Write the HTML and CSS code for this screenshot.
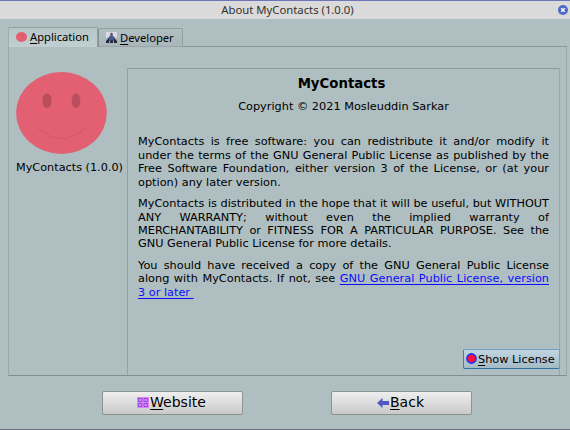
FILE: index.html
```
<!DOCTYPE html>
<html lang="en">
<head>
<meta charset="utf-8">
<title>About MyContacts</title>
<link rel="stylesheet" href="styles.css">
</head>
<body>
<div class="window">
  <header class="titlebar">
    <span class="caption">About MyContacts (1.0.0)</span>
    <svg class="close" viewBox="0 0 10 10"><circle cx="5" cy="5" r="5" fill="#5068c4"/><path d="M3.2 3.2l3.6 3.6M6.8 3.2L3.2 6.8" stroke="#fff" stroke-width="1.5"/></svg>
  </header>
  <nav class="tabs">
    <div class="tab active">
      <svg class="tab-face" viewBox="0 0 11 10"><ellipse cx="5.5" cy="5" rx="5.5" ry="5" fill="#e45e70"/><ellipse cx="3.7" cy="3.5" rx=".5" ry=".7" fill="#c95263"/><ellipse cx="7.3" cy="3.5" rx=".5" ry=".7" fill="#c95263"/></svg>
      <span><u>A</u>pplication</span>
    </div>
    <div class="tab">
      <svg class="tab-person" viewBox="0 0 11 11"><path fill="#d8dce8" d="M0 0h11v11H0z"/><path fill="#a4abba" d="M0 6l3-1 5 0 3 1v5H0z"/><path fill="#465b8c" d="M4 3.300h3L9 7 8 8V9H3V8L2 7z"/><path fill="#24273b" d="M0 9l3-3v5H0zM8 6l3 3v2H8zM4 8.500h3V11H4z"/><circle cx="5.500" cy="2" r="1.300" fill="#62504f"/></svg>
      <span><u>D</u>eveloper</span>
    </div>
    <div class="tab-line"></div>
  </nav>
  <main class="panel">
    <aside class="side">
      <svg class="face" viewBox="0 0 91 82"><ellipse cx="45.5" cy="41" rx="45.3" ry="40.9" fill="#e26072"/><ellipse cx="31" cy="28.7" rx="4.6" ry="7.4" fill="#b94e5d"/><ellipse cx="60" cy="28.7" rx="4.4" ry="7.4" fill="#b94e5d"/><path d="M20.5 55Q45.5 78 70.500 55" fill="none" stroke="#cb5465" stroke-width=".7"/></svg>
      <div class="name">MyContacts (1.0.0)</div>
    </aside>
    <section class="about">
      <h1>MyContacts</h1>
      <div class="copyright">Copyright © 2021 Mosleuddin Sarkar</div>
      <p>
        <span class="line">MyContacts is free software: you can redistribute it and/or modify it</span>
        <span class="line">under the terms of the GNU General Public License as published by the</span>
        <span class="line">Free Software Foundation, either version 3 of the License, or (at your</span>
        <span class="line last">option) any later version.</span>
      </p>
      <p>
        <span class="line">MyContacts is distributed in the hope that it will be useful, but WITHOUT</span>
        <span class="line">ANY WARRANTY; without even the implied warranty of</span>
        <span class="line">MERCHANTABILITY or FITNESS FOR A PARTICULAR PURPOSE. See the</span>
        <span class="line last">GNU General Public License for more details.</span>
      </p>
      <p>
        <span class="line">You should have received a copy of the GNU General Public License</span>
        <span class="line">along with MyContacts. If not, see <a>GNU General Public License, version</a></span>
        <span class="line last"><a>3 or later&nbsp;</a></span>
      </p>
      <div class="license"><svg viewBox="0 0 11 11"><circle cx="5.500" cy="5.500" r="4.600" fill="#f81040" stroke="#2030ff" stroke-width="1.600"/></svg><span><u>S</u>how License</span></div>
    </section>
  </main>
  <footer class="actions">
    <div class="button"><svg class="grid-icon" viewBox="0 0 12 11"><path fill="#e583ee" d="M0 0h12v11H0z"/><path fill="none" stroke="#8050ec" d="M1.500 1.500h3.500v3h-3.500zM7 1.500h3.500v3h-3.500zM1.500 6.500h3.500v3h-3.500zM7 6.500h3.500v3h-3.500z"/></svg><span><u>W</u>ebsite</span></div>
    <div class="button"><svg class="back-icon" viewBox="0 0 12 10"><path fill="#5357c0" d="M0 5l5.500-5v3H12v4H5.500v3z"/></svg><span><u>B</u>ack</span></div>
  </footer>
</div>
</body>
</html>
```

FILE: styles.css
```
* { box-sizing: border-box; }
body { margin: 0; background: #afbec1; color: #000; font-family: "DejaVu Sans", sans-serif; }
svg { display: block; flex: none; }
u { text-decoration: underline; text-decoration-thickness: 1px; text-underline-offset: 2px; text-decoration-skip-ink: none; }
.window { width: 570px; height: 430px; display: flex; flex-direction: column; overflow: hidden; border-top: 1px solid #6c76b8; border-bottom: 1px solid #6c6c84; }
.titlebar { height: 18px; flex: none; background: #dadada; display: grid; grid-template-columns: 1fr auto 1fr; align-items: center; padding: 0 2px 0 2px; }
.caption { grid-column: 2; padding-right: 2px; margin-left: 7px; font: 11.300px/16px "Noto Sans", sans-serif; padding-bottom: 1px; color: #35322e; }
.close { width: 10px; height: 10px; justify-self: end; margin-bottom: 1px; }
.tabs { display: flex; align-items: flex-end; height: 28px; flex: none; padding: 0 3px 0 8px; font: 11.200px/18px "Noto Sans", sans-serif; }
.tab { display: flex; align-items: center; height: 19px; width: 85px; gap: 3px; padding-left: 7px; border: 1px solid #919fa2; border-left-color: #839093; border-bottom-color: #98a6a9; border-radius: 2px 2px 0 0; background: linear-gradient(#b1bec1, #a9b7ba); white-space: nowrap; }
.tab.active { height: 20px; width: 90px; background: linear-gradient(#b5c5c8, #c0cfd1); border-bottom: 0; border-left-color: #a0adb0; }
.tab.active span { margin-bottom: 1px; }
.tab-face { width: 11px; height: 10px; margin-bottom: 2px; }
.tab-person { width: 11px; height: 11px; margin-bottom: 1px; }
.tab-line { flex: 1; border-bottom: 1px solid #87979a; }
.panel { height: 329px; flex: none; margin: 0 3px 0 8px; display: flex; border: 1px solid #9aa8ab; border-top: 0; border-bottom-color: #7e8f92; }
.side { width: 118px; padding: 25px 0 0 7px; flex: none; }
.face { width: 91px; height: 82px; }
.name { font-size: 11.250px; line-height: 14px; margin-top: 7px; white-space: nowrap; }
.about { width: 433px; margin-top: 21px; border: 1px solid #8a999c; border-bottom: 0; border-left-color: #93a1a4; border-right-color: #9aa7aa; padding: 7px 10px 0 10px; font-size: 11.300px; line-height: 13.400px; position: relative; }
h1 { margin: 0; padding-right: 4px; font-size: 13.300px; line-height: 16px; text-align: center; }
.copyright { text-align: center; margin-top: 8px; line-height: 14px; }
p { margin: 21.400px 0 0; }
p + p { margin-top: 8.200px; }
.line { display: block; white-space: nowrap; text-align-last: justify; }
.last { text-align-last: left; }
a { color: #0c0cff; text-decoration: underline; text-decoration-thickness: 1px; text-underline-offset: 2px; text-decoration-skip-ink: none; }
.license { position: absolute; right: -1px; bottom: 6px; width: 97px; height: 20px; display: flex; align-items: center; gap: 1px; padding: 0 0 0 2px; border: 1px solid #6d9fc0; border-bottom-color: #2c73a7; border-left-color: #3c80b0; border-radius: 2px; background: linear-gradient(#c2d5e0, #a4bac5); white-space: nowrap; }
.license svg { width: 11px; height: 11px; margin-bottom: 1px; }
.license span { margin-top: 1px; }
.actions { display: flex; gap: 88px; padding: 15px 0 0 102px; }
.button { width: 141px; height: 24px; display: flex; align-items: center; justify-content: center; padding-right: 2px; border: 1px solid #8d9293; border-radius: 2px; background: linear-gradient(#efefef, #c9c9c9); font-size: 14px; line-height: 20px; }
.button span { margin-bottom: 2px; }
.button svg { margin: 0 1px 1px 0; }
.grid-icon { width: 12px; height: 11px; }
.back-icon { width: 12px; height: 10px; }
```
